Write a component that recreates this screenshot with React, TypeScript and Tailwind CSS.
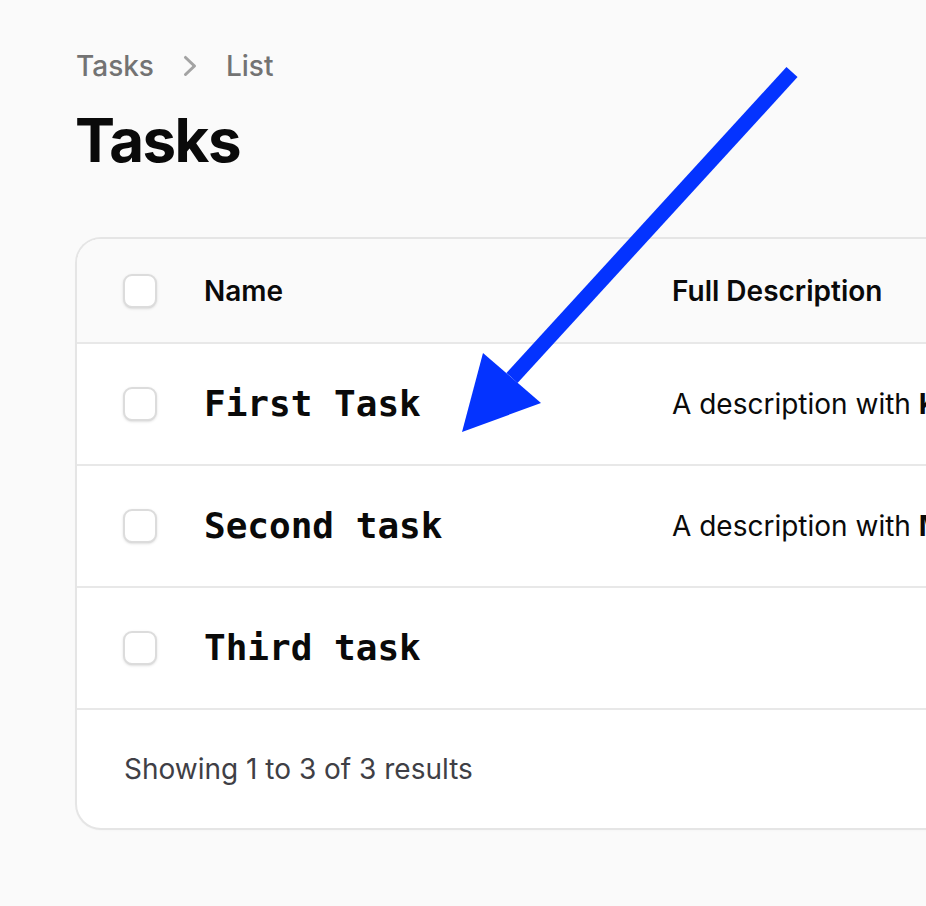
import React from "react";

const tasks = [
  { name: "First Task", desc: "Key points", hasDesc: true },
  { name: "Second task", desc: "Markdown", hasDesc: true },
  { name: "Third task", desc: "", hasDesc: false },
];

function Checkbox() {
  return <div className="h-[34px] w-[34px] rounded-[9px] border-2 border-[#dcdcdc] bg-white shadow-sm"></div>;
}

function ChevronRight() {
  return (
    <svg viewBox="0 0 20 20" fill="currentColor" className="h-10 w-10 text-[#a3a3a3]">
      <path
        fillRule="evenodd"
        d="M7.21 14.77a.75.75 0 01.02-1.06L11.168 10 7.23 6.29a.75.75 0 111.04-1.08l4.5 4.25a.75.75 0 010 1.08l-4.5 4.25a.75.75 0 01-1.06-.02z"
        clipRule="evenodd"
      />
    </svg>
  );
}

export default function App() {
  return (
    <div className="relative min-h-screen overflow-hidden bg-[#fafafa] font-['Inter',sans-serif] text-[#0a0a0a]">
      <div className="pl-[76px] pt-[46px]">
        {/* Breadcrumbs */}
        <nav className="flex items-center gap-4 text-[28px] leading-[40px] font-medium text-[#737373]">
          <span>Tasks</span>
          <ChevronRight />
          <span>List</span>
        </nav>
        <h1 className="-ml-[1px] mt-[18px] text-[60px] leading-[72px] font-bold tracking-tight">Tasks</h1>

        {/* Table card */}
        <div className="ml-[1px] mt-[63px] w-[1400px] overflow-hidden rounded-[24px] bg-white shadow-sm ring-2 ring-[#e5e5e5]">
          <div className="flex h-[105px] items-center border-b-2 border-[#e8e8e8] bg-[#fafafa]">
            <div className="pl-[46px] pr-[47px]">
              <Checkbox />
            </div>
            <div className="w-[468px] text-[28px] font-semibold">Name</div>
            <div className="text-[28px] font-semibold">Full Description</div>
          </div>
          {tasks.map((t, i) => (
            <div key={i} className="flex h-[122px] items-center border-b-2 border-[#e8e8e8]">
              <div className="pl-[46px] pr-[47px]">
                <Checkbox />
              </div>
              <div className="w-[468px] font-['DejaVu_Sans_Mono',monospace] text-[36px] font-bold">{t.name}</div>
              {t.hasDesc && (
                <div className="whitespace-nowrap text-[28px]">
                  A description with <b className="font-bold">{t.desc}</b>
                </div>
              )}
            </div>
          ))}
          <div className="flex h-[118px] items-center pl-[47px] text-[28px] text-[#3f3f46]">
            Showing 1 to 3 of 3 results
          </div>
        </div>
      </div>

      {/* Annotation arrow */}
      <svg className="pointer-events-none absolute left-0 top-0" width="926" height="906" viewBox="0 0 926 906">
        <line x1="792" y1="72" x2="512" y2="378" stroke="#0433ff" strokeWidth="15" />
        <polygon points="483,353 541,403 462,432" fill="#0433ff" />
      </svg>
    </div>
  );
}
